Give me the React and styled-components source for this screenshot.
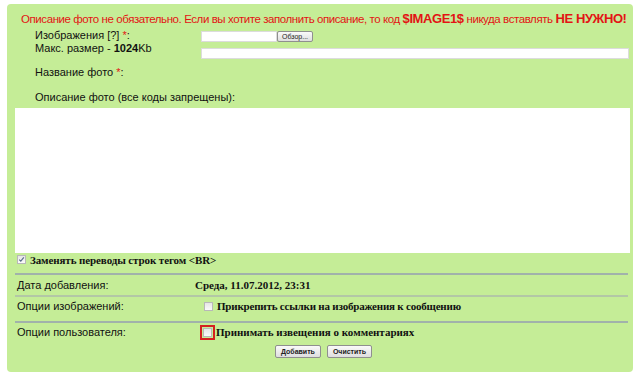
import React from "react";
import styled, { createGlobalStyle } from "styled-components";

const Global = createGlobalStyle`
  html, body {
    margin: 0;
    padding: 0;
    background: #ffffff;
  }
`;

const Panel = styled.div`
  margin: 4px 0 0 7px;
  width: 626px;
  height: 368px;
  box-sizing: border-box;
  background: #c5ed97;
  border-radius: 4px;
  font-family: "Liberation Sans", Arial, sans-serif;
  color: #111;
  overflow: hidden;
`;

const Notice = styled.div`
  padding: 7px 0 0 14px;
  height: 16px;
  line-height: 16px;
  font-size: 11.5px;
  letter-spacing: -0.42px;
  color: #e31414;
  white-space: nowrap;
`;

const Big = styled.b`
  font-size: 13px;
  letter-spacing: -0.4px;
`;

const Form = styled.div`
  display: grid;
  grid-template-columns: 166px 1fr;
  padding: 0 4px 0 28px;
`;

const Label = styled.div`
  font-size: 11px;
  line-height: 13px;
  padding-top: ${p => p.$top || 0}px;
`;

const Star = styled.span`
  color: #e31414;
`;

const Inputs = styled.div`
  display: flex;
  flex-direction: column;
  gap: 6px;
  padding-top: 4px;
`;

const FileRow = styled.div`
  display: flex;
  align-items: center;
`;

const TextBox = styled.div`
  height: 11px;
  width: ${p => (p.$width ? `${p.$width}px` : "auto")};
  background: #fff;
  border: 1px solid #dcdcdc;
  box-sizing: border-box;
`;

const SmallButton = styled.div`
  height: ${p => p.$h || 11}px;
  padding: 0 ${p => p.$pad || 5}px;
  box-sizing: border-box;
  display: inline-flex;
  align-items: center;
  justify-content: center;
  font-family: "Liberation Sans", Arial, sans-serif;
  font-size: 7px;
  font-weight: ${p => (p.$bold ? 700 : 400)};
  color: #222;
  background: linear-gradient(#fafafa, #dedede);
  border: 1px solid #8f8f8f;
  border-radius: 2px;
`;

const Wide = styled.div`
  grid-column: 1 / span 2;
  font-size: 11px;
  line-height: 13px;
  padding-top: ${p => p.$top || 0}px;
`;

const TextArea = styled.div`
  margin: 4px 0 0 8px;
  width: 615px;
  height: 145px;
  background: #fff;
`;

const CheckRow = styled.div`
  display: flex;
  align-items: center;
  gap: 4px;
  height: 13px;
  padding-left: 10px;
  font-family: "Liberation Serif", "DejaVu Serif", serif;
  font-size: 11px;
  font-weight: 700;
  letter-spacing: -0.1px;
`;

const Box = styled.span`
  position: relative;
  width: 9px;
  height: 9px;
  box-sizing: border-box;
  border: 1px solid #b8b8b8;
  background: linear-gradient(#e6e6e6, #fafafa);
  flex: none;
  outline: ${p => (p.$alert ? "2px solid #d42020" : "none")};
  outline-offset: 1px;
`;

const Tick = styled.svg`
  position: absolute;
  left: 0;
  top: 0;
`;

const Rule = styled.div`
  height: 2px;
  margin: ${p => p.$mt || 0}px 5px 0 8px;
  background: ${p => (p.$light ? "#b3c7a6" : "#a1b2ab")};
`;

const InfoRow = styled.div`
  display: grid;
  grid-template-columns: 178px 1fr;
  align-items: center;
  height: ${p => p.$h}px;
  padding-left: 10px;
  padding-bottom: ${p => p.$pb || 0}px;
  box-sizing: border-box;
`;

const InfoLabel = styled.div`
  font-size: 11px;
  line-height: 13px;
`;

const SerifText = styled.div`
  display: flex;
  align-items: center;
  gap: 4px;
  padding-left: ${p => p.$pl || 0}px;
  font-family: "Liberation Serif", "DejaVu Serif", serif;
  font-size: 11px;
  font-weight: 700;
  letter-spacing: ${p => p.$ls || 0}px;
`;

const Buttons = styled.div`
  display: flex;
  gap: 6px;
  padding-left: 268px;
`;

function Check({ checked, alert }) {
  return (
    <Box $alert={alert}>
      {checked && (
        <Tick width="7" height="7" viewBox="0 0 7 7">
          <path d="M1.2 3.6 L2.8 5.2 L5.8 1.4" fill="none" stroke="#5a6e8c" strokeWidth="1.2" />
        </Tick>
      )}
    </Box>
  );
}

export default function App() {
  return (
    <>
      <Global />
      <Panel>
        <Notice>
          Описание фото не обязательно. Если вы хотите заполнить описание, то код <Big>$IMAGE1$</Big> никуда вставлять <Big>НЕ НУЖНО!</Big>
        </Notice>
        <Form>
          <Label $top={2}>
            Изображения [?] <Star>*</Star>:
            <br />
            Макс. размер - <b>1024</b>Kb
          </Label>
          <Inputs>
            <FileRow>
              <TextBox $width={76} />
              <SmallButton $h={11} $pad={4}>Обзор...</SmallButton>
            </FileRow>
            <TextBox />
          </Inputs>
          <Wide $top={7}>
            Название фото <Star>*</Star>:
          </Wide>
          <Wide $top={12}>Описание фото (все коды запрещены):</Wide>
        </Form>
        <TextArea />
        <CheckRow>
          <Check checked />
          Заменять переводы строк тегом &lt;BR&gt;
        </CheckRow>
        <Rule $mt={7} />
        <InfoRow $h={20}>
          <InfoLabel>Дата добавления:</InfoLabel>
          <SerifText>Среда, 11.07.2012, 23:31</SerifText>
        </InfoRow>
        <Rule $light />
        <InfoRow $h={24} $pb={6}>
          <InfoLabel>Опции изображений:</InfoLabel>
          <SerifText $pl={9} $ls={-0.2}>
            <Check />
            Прикрепить ссылки на изображения к сообщению
          </SerifText>
        </InfoRow>
        <Rule />
        <InfoRow $h={22} $pb={4}>
          <InfoLabel>Опции пользователя:</InfoLabel>
          <SerifText $pl={8}>
            <Check alert />
            Принимать извещения о комментариях
          </SerifText>
        </InfoRow>
        <Buttons>
          <SmallButton $h={13} $pad={5} $bold>Добавить</SmallButton>
          <SmallButton $h={13} $pad={5} $bold>Очистить</SmallButton>
        </Buttons>
      </Panel>
    </>
  );
}
